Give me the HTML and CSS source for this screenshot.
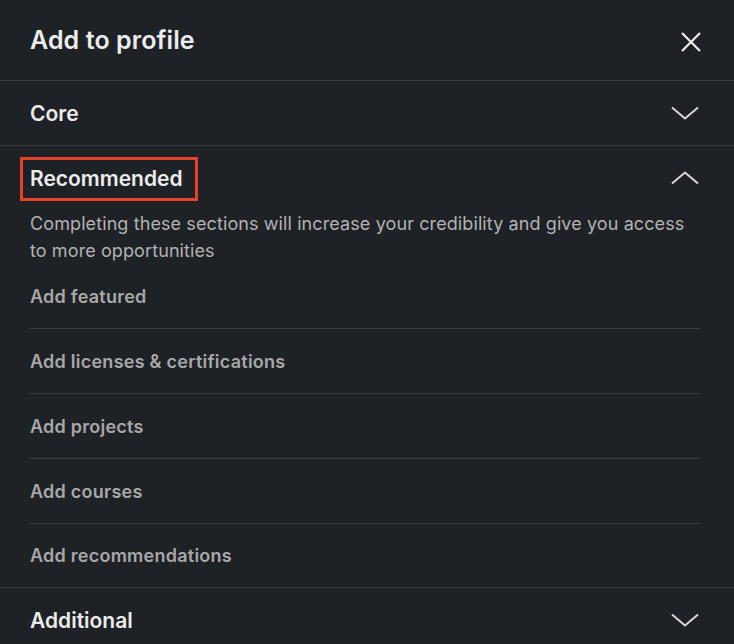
FILE: index.html
```html
<!DOCTYPE html>
<html lang="en">
<head>
<meta charset="utf-8">
<title>Add to profile</title>
<link rel="stylesheet" href="styles.css">
</head>
<body>
<div class="modal">
  <header class="modal-header">
    <h2 class="modal-title">Add to profile</h2>
    <button class="icon-btn close-btn" aria-label="Close">
      <svg width="20" height="20" viewBox="0 0 20 20"><path d="M1 1 L19 19 M19 1 L1 19" stroke="currentColor" stroke-width="2.2" fill="none"/></svg>
    </button>
  </header>

  <section class="section">
    <div class="section-head">
      <span class="section-label">Core</span>
      <svg class="chevron" width="28" height="14" viewBox="0 0 28 14"><path d="M1 1.5 L14 12.5 L27 1.5" stroke="currentColor" stroke-width="2" fill="none"/></svg>
    </div>
  </section>

  <section class="section open">
    <div class="section-head">
      <span class="section-label highlighted">Recommended</span>
      <svg class="chevron" width="28" height="14" viewBox="0 0 28 14"><path d="M1 12.5 L14 1.5 L27 12.5" stroke="currentColor" stroke-width="2" fill="none"/></svg>
    </div>
    <p class="section-desc">Completing these sections will increase your credibility and give you access to more opportunities</p>
    <ul class="item-list">
      <li class="item">Add featured</li>
      <li class="item">Add licenses &amp; certifications</li>
      <li class="item">Add projects</li>
      <li class="item">Add courses</li>
      <li class="item">Add recommendations</li>
    </ul>
  </section>

  <section class="section">
    <div class="section-head">
      <span class="section-label">Additional</span>
      <svg class="chevron" width="28" height="14" viewBox="0 0 28 14"><path d="M1 1.5 L14 12.5 L27 1.5" stroke="currentColor" stroke-width="2" fill="none"/></svg>
    </div>
  </section>
</div>
</body>
</html>
```

FILE: styles.css
```css
* { box-sizing: border-box; }

html, body {
  margin: 0;
  padding: 0;
  background: #1e2126;
}

body {
  font-family: Inter, "Noto Sans", "Liberation Sans", sans-serif;
  color: #e8e8e8;
  overflow: hidden;
}

.modal {
  width: 734px;
  height: 644px;
  background: #1e2126;
  border-top-right-radius: 8px;
  overflow: hidden;
}

.modal-header {
  height: 81px;
  display: flex;
  align-items: center;
  justify-content: space-between;
  padding: 0 33px 0 30px;
  border-bottom: 1px solid #3a3d43;
}

.modal-title {
  margin: 0;
  font-size: 25px;
  font-weight: 600;
  color: #ededed;
  letter-spacing: 0.1px;
}

.icon-btn {
  background: none;
  border: 0;
  padding: 0;
  color: #f0f0f0;
  display: flex;
  cursor: pointer;
}

.close-btn {
  position: relative;
  top: 2px;
}

.section {
  border-bottom: 1px solid #3a3d43;
}

.section-head {
  height: 64px;
  display: flex;
  align-items: center;
  justify-content: space-between;
  padding: 0 35px 0 30px;
}

.section-label {
  font-size: 21px;
  font-weight: 600;
  color: #ebebeb;
}

.highlighted {
  position: relative;
}

.highlighted::after {
  content: "";
  position: absolute;
  left: -10px;
  right: -15px;
  top: -9px;
  bottom: -10px;
  border: 3px solid #e8412b;
}

.chevron {
  color: #d8d8d8;
}

.section-desc {
  margin: 0;
  padding: 1px 30px 0;
  font-size: 18px;
  line-height: 26.5px;
  color: #b2b2b2;
  letter-spacing: 0.1px;
}

.item-list {
  list-style: none;
  margin: 0 33px 0 30px;
  padding: 0;
}

.item {
  height: 65px;
  display: flex;
  align-items: center;
  font-size: 18px;
  font-weight: 600;
  color: #a8a8a8;
  letter-spacing: 0.25px;
  border-bottom: 1px solid #3a3d43;
}

.item:last-child {
  border-bottom: 0;
  height: 63px;
}
```
